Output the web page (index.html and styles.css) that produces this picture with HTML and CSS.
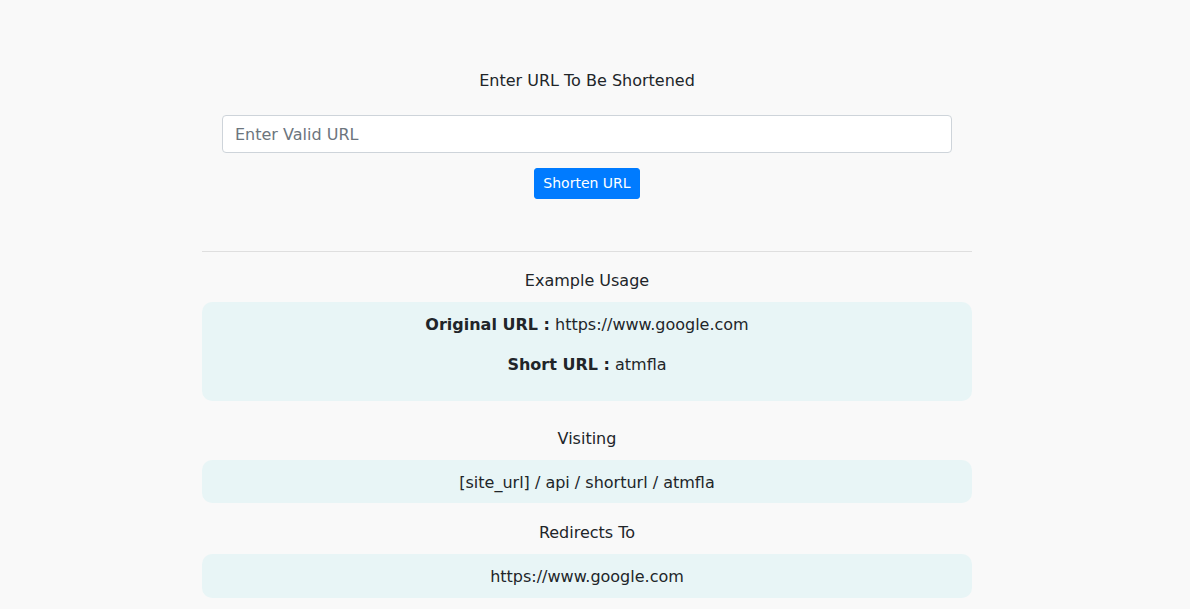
FILE: index.html
```html
<!DOCTYPE html>
<html lang="en">
<head>
<meta charset="utf-8">
<title>URL Shortener</title>
<link rel="stylesheet" href="styles.css">
</head>
<body>
<main class="page">
  <section class="shorten">
    <h1 class="title">Enter URL To Be Shortened</h1>
    <form class="form">
      <input class="url-input" type="text" placeholder="Enter Valid URL">
      <button class="btn" type="button">Shorten URL</button>
    </form>
  </section>
  <hr class="divider">
  <section class="usage">
    <h2 class="label">Example Usage</h2>
    <div class="box box-example">
      <p class="line"><strong>Original URL :</strong> https://www.google.com</p>
      <p class="line"><strong>Short URL :</strong> atmfla</p>
    </div>
    <h2 class="label label-gap">Visiting</h2>
    <div class="box">[site_url] / api / shorturl / atmfla</div>
    <h2 class="label label-gap2">Redirects To</h2>
    <div class="box">https://www.google.com</div>
  </section>
</main>
</body>
</html>
```

FILE: styles.css
```css
html, body {
  margin: 0;
  padding: 0;
}
body {
  background: #f9f9f9;
  color: #212529;
  font-family: "DejaVu Sans", sans-serif;
  font-size: 16px;
  line-height: 24px;
  padding-right: 16px;
}
.page {
  width: 770px;
  margin: 0 auto;
  padding-top: 69px;
}
.shorten {
  text-align: center;
}
.title {
  margin: 0;
  font-size: 16px;
  font-weight: 400;
  line-height: 24px;
}
.form {
  display: flex;
  flex-direction: column;
  align-items: center;
  margin-top: 22px;
  gap: 15px;
}
.url-input {
  box-sizing: border-box;
  width: 730px;
  height: 38px;
  padding: 6px 12px;
  font-family: "DejaVu Sans", sans-serif;
  font-size: 16px;
  color: #495057;
  background: #fff;
  border: 1px solid #ced4da;
  border-radius: 4px;
  outline: none;
}
.url-input::placeholder {
  color: #6c757d;
}
.btn {
  box-sizing: border-box;
  height: 31px;
  padding: 4px 8px;
  font-family: "DejaVu Sans", sans-serif;
  font-size: 14px;
  line-height: 21px;
  color: #fff;
  background: #007bff;
  border: 1px solid #007bff;
  border-radius: 3px;
}
.divider {
  margin: 52px 0 0;
  border: 0;
  border-top: 1px solid rgba(0, 0, 0, 0.1);
  height: 0;
}
.usage {
  text-align: center;
  padding-top: 17px;
}
.label {
  margin: 0 0 9px;
  font-size: 16px;
  font-weight: 400;
  line-height: 24px;
}
.label-gap {
  margin-top: 26px;
}
.label-gap2 {
  margin-top: 18px;
}
.box {
  background: #e8f5f6;
  border-radius: 10px;
  padding: 10.6px 16px 8.6px;
}
.line {
  margin: 0 0 16px;
}
.line strong {
  font-weight: 700;
}
```
